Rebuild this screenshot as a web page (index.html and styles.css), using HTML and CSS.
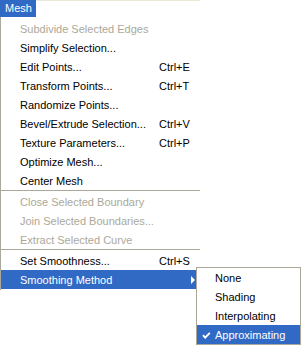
FILE: index.html
```html
<!DOCTYPE html>
<html>
<head>
<meta charset="utf-8">
<link rel="stylesheet" href="styles.css">
</head>
<body>
<div class="menubar">
  <div class="bar-item active">Mesh</div>
  <div class="bar-rest"></div>
</div>
<div class="menu">
  <div class="row disabled"><span class="label">Subdivide Selected Edges</span></div>
  <div class="row"><span class="label">Simplify Selection...</span></div>
  <div class="row"><span class="label">Edit Points...</span><span class="key">Ctrl+E</span></div>
  <div class="row"><span class="label">Transform Points...</span><span class="key">Ctrl+T</span></div>
  <div class="row"><span class="label">Randomize Points...</span></div>
  <div class="row"><span class="label">Bevel/Extrude Selection...</span><span class="key">Ctrl+V</span></div>
  <div class="row"><span class="label">Texture Parameters...</span><span class="key">Ctrl+P</span></div>
  <div class="row"><span class="label">Optimize Mesh...</span></div>
  <div class="row"><span class="label">Center Mesh</span></div>
  <div class="sep"></div>
  <div class="row disabled"><span class="label">Close Selected Boundary</span></div>
  <div class="row disabled"><span class="label">Join Selected Boundaries...</span></div>
  <div class="row disabled"><span class="label">Extract Selected Curve</span></div>
  <div class="sep"></div>
  <div class="row"><span class="label">Set Smoothness...</span><span class="key">Ctrl+S</span></div>
  <div class="row hl"><span class="label">Smoothing Method</span><span class="arrow"></span></div>
</div>
<div class="submenu">
  <div class="srow"><span class="check"></span><span>None</span></div>
  <div class="srow"><span class="check"></span><span>Shading</span></div>
  <div class="srow"><span class="check"></span><span>Interpolating</span></div>
  <div class="srow hl"><span class="check"><svg width="9" height="9" viewBox="0 0 9 9"><path d="M1 4.2 L3.2 6.6 L7.8 1.8" fill="none" stroke="#fff" stroke-width="1.9"/></svg></span><span>Approximating</span></div>
</div>
</body>
</html>
```

FILE: styles.css
```css
html, body {
  margin: 0;
  padding: 0;
  background: #fff;
}
body {
  width: 302px;
  height: 346px;
  position: relative;
  overflow: hidden;
  font-family: "Liberation Sans", Arial, sans-serif;
  font-size: 11px;
  color: #000;
}
.menubar {
  display: flex;
  height: 17px;
}
.bar-item {
  width: 31px;
  height: 17px;
  padding-left: 5px;
  line-height: 16px;
}
.bar-item.active {
  background: #316ac5;
  color: #fff;
}
.bar-rest {
  width: 164px;
  height: 1px;
  background: #ece9d8;
}
.menu {
  width: 199px;
  border-left: 1px solid #aca899;
  padding: 2px 0 1px 0;
}
.row {
  height: 19px;
  display: flex;
  align-items: center;
  padding-left: 19px;
  position: relative;
}
.row .label {
  width: 139px;
  white-space: nowrap;
}
.row .key {
  white-space: nowrap;
}
.row.disabled {
  color: #aca899;
}
.row.hl {
  background: #316ac5;
  color: #fff;
}
.arrow {
  position: absolute;
  left: 190px;
  top: 6px;
  width: 0;
  height: 0;
  border-left: 4px solid #fff;
  border-top: 4px solid transparent;
  border-bottom: 4px solid transparent;
}
.sep {
  height: 2px;
  box-sizing: border-box;
  border-top: 1px solid #aca899;
}
.submenu {
  position: absolute;
  left: 196px;
  top: 267px;
  width: 103px;
  border: 1px solid #aca899;
  background: #fff;
}
.srow {
  height: 19px;
  display: flex;
  align-items: center;
}
.srow.hl {
  background: #316ac5;
  color: #fff;
}
.check {
  width: 18px;
  height: 19px;
  display: flex;
  align-items: center;
  justify-content: flex-end;
  padding-right: 0;
  box-sizing: border-box;
}
.check svg {
  margin-right: 4px;
  margin-top: 1px;
}
```
